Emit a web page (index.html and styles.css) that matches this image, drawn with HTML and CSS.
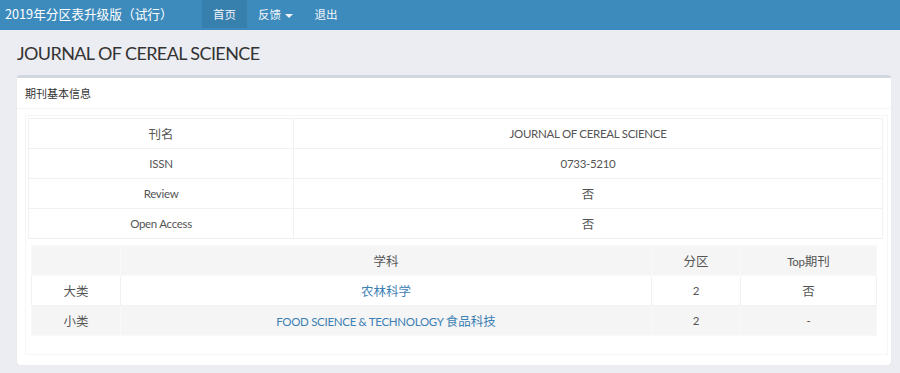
FILE: index.html
```html
<!DOCTYPE html>
<html lang="zh-CN">
<head>
  <meta charset="UTF-8" />
  <meta name="viewport" content="width=device-width, initial-scale=1.0" />
  <title>JOURNAL OF CEREAL SCIENCE</title>
  <link rel="stylesheet" href="styles.css">
</head>
<body>
  <nav class="navbar">
    <span class="brand">2019年分区表升级版（试行）</span>
    <ul class="nav">
      <li class="active"><a>首页</a></li>
      <li><a>反馈 <span class="caret"></span></a></li>
      <li><a>退出</a></li>
    </ul>
  </nav>
  <div class="content">
    <h1 class="page-title">JOURNAL OF CEREAL SCIENCE</h1>
    <div class="box">
      <div class="box-header">期刊基本信息</div>
      <div class="box-body">
        <div class="frame">
          <table class="info">
            <tr><td class="label zh">刊名</td><td>JOURNAL OF CEREAL SCIENCE</td></tr>
            <tr><td class="label">ISSN</td><td>0733-5210</td></tr>
            <tr><td class="label">Review</td><td class="zh">否</td></tr>
            <tr><td class="label">Open Access</td><td class="zh">否</td></tr>
          </table>
          <table class="zone">
            <tr><td class="c1"></td><td class="c2 zh">学科</td><td class="c3 zh">分区</td><td class="c4">Top<span class="zh">期刊</span></td></tr>
            <tr><td class="zh">大类</td><td><a class="zh">农林科学</a></td><td>2</td><td class="zh">否</td></tr>
            <tr><td class="zh">小类</td><td><a>FOOD SCIENCE &amp; TECHNOLOGY <span class="zh">食品科技</span></a></td><td>2</td><td>-</td></tr>
          </table>
        </div>
      </div>
    </div>
  </div>
</body>
</html>
```

FILE: styles.css
```css
body {
  margin: 0;
  background: #ecedf2;
  font-family: Lato, "Noto Sans CJK SC", sans-serif;
  color: #333;
}
.navbar {
  height: 30px;
  background: #3d8bbd;
  border-bottom: 1px solid #3a88bf;
  box-sizing: border-box;
  display: flex;
  align-items: stretch;
  font-family: "Noto Sans CJK SC", sans-serif;
}
.brand {
  color: #fff;
  font-size: 12.7px;
  line-height: 28px;
  padding-left: 5px;
  width: 197px;
}
.nav {
  list-style: none;
  margin: 0;
  padding: 0;
  display: flex;
}
.nav li a {
  display: block;
  padding: 0 11px;
  line-height: 28px;
  font-size: 11.5px;
  color: #f2f6fa;
}
.nav li.active a {
  background: #377fad;
}
.caret {
  display: inline-block;
  width: 0;
  height: 0;
  border-left: 4px solid transparent;
  border-right: 4px solid transparent;
  border-top: 4px solid #f2f6fa;
  vertical-align: middle;
  margin-left: 1px;
}
.content {
  padding: 9px 9px 0 17px;
}
.page-title {
  margin: 0 0 8px;
  font-size: 18px;
  line-height: 28px;
  font-weight: normal;
  letter-spacing: -0.6px;
  color: #333;
}
.box {
  background: #fff;
  border-top: 3px solid #d2d6de;
  border-radius: 3px;
  box-shadow: 0 1px 1px rgba(0, 0, 0, 0.1);
}
.box-header {
  padding: 0 8px;
  height: 30px;
  line-height: 30px;
  font-size: 11px;
  border-bottom: 1px solid #f4f4f4;
  font-family: "Noto Sans CJK SC", sans-serif;
}
.box-body {
  padding: 6px 3px 10px 8px;
}
.frame {
  border: 1px solid #f6f6f6;
  padding: 2px 4px 18px 2px;
}
table {
  width: 100%;
  border-collapse: collapse;
  font-size: 11.5px;
  letter-spacing: -0.3px;
  text-align: center;
  color: #555;
}
table .zh {
  font-size: 12.5px;
  letter-spacing: 0;
}
table td {
  border: 1px solid #f1f1f1;
  padding: 0;
  height: 29px;
}
.info .label {
  width: 264px;
}
.zone {
  margin: 6px 0 0 3px;
  width: calc(100% - 9px);
}
.zone td {
  height: 29px;
}
.zone tr:nth-child(odd) td {
  background: #f5f5f5;
  border-color: #f9f9f9;
}
.zone .c1 { width: 88px; }
.zone .c3 { width: 88px; }
.zone .c4 { width: 135px; }
.zone a {
  color: #3c80b4;
}
```
